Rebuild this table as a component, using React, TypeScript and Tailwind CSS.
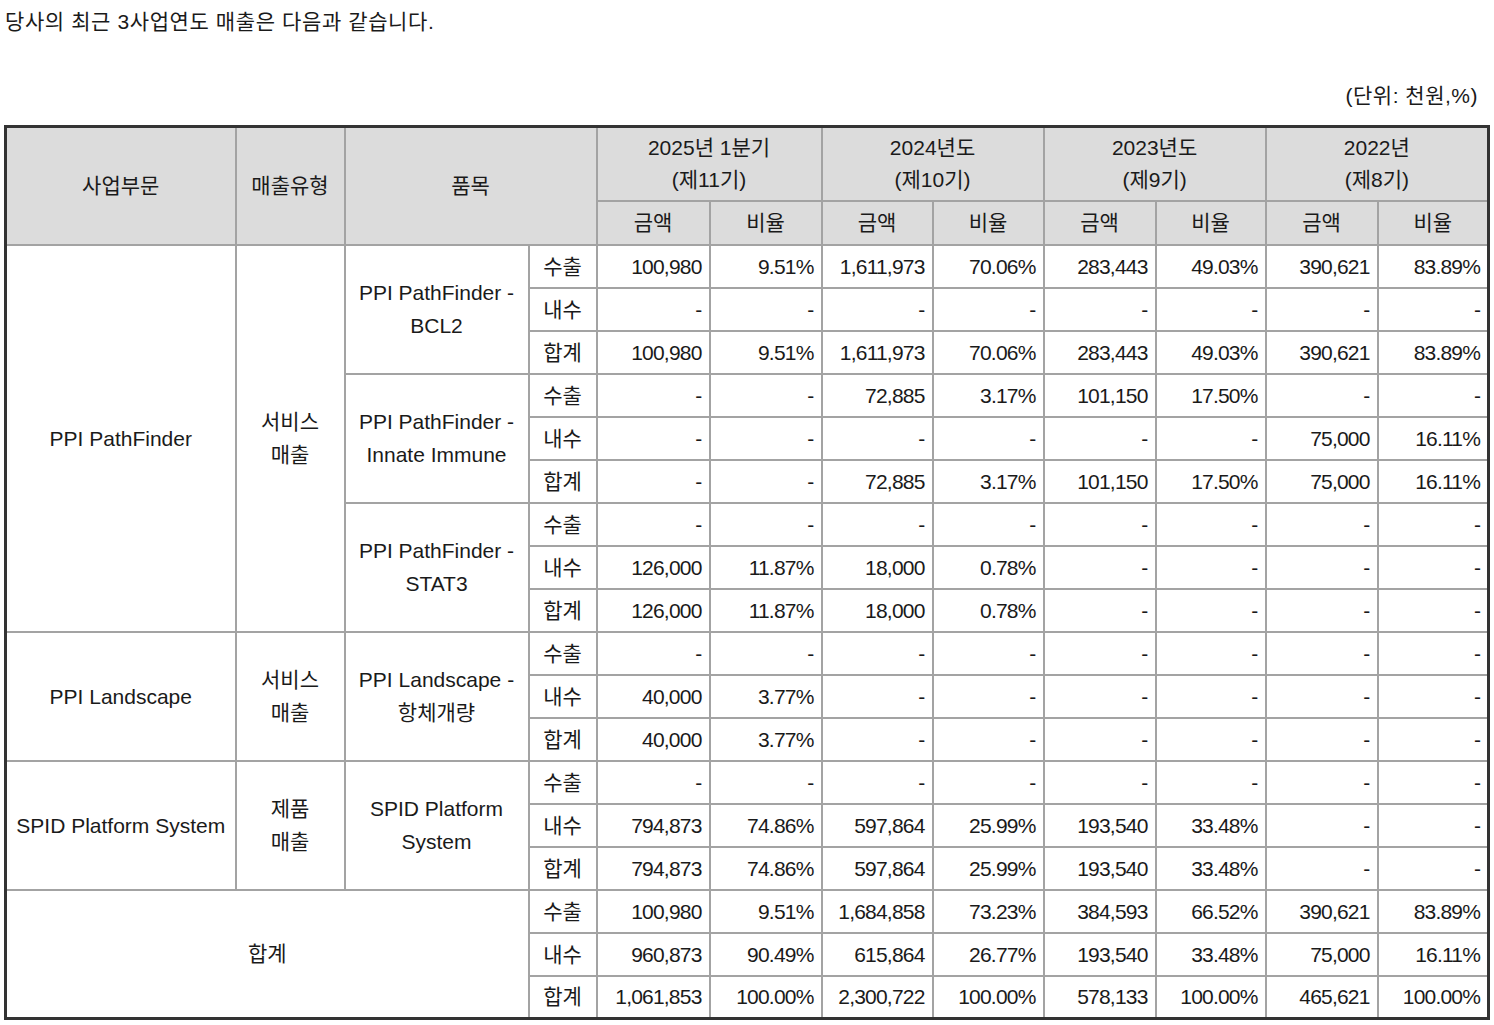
const periods = [
  { year: "2025년 1분기", term: "(제11기)" },
  { year: "2024년도", term: "(제10기)" },
  { year: "2023년도", term: "(제9기)" },
  { year: "2022년", term: "(제8기)" },
];

const colWidths = [230, 109, 184, 68, 113, 112, 111, 111, 112, 110, 112, 111];

const D = ["-", "-", "-", "-", "-", "-", "-", "-"];

type Item = { name: string[]; rows: [string, string[]][] };
type Segment = { name: string; type: string[]; items: Item[] };

const segments: Segment[] = [
  {
    name: "PPI PathFinder",
    type: ["서비스", "매출"],
    items: [
      {
        name: ["PPI PathFinder -", "BCL2"],
        rows: [
          ["수출", ["100,980", "9.51%", "1,611,973", "70.06%", "283,443", "49.03%", "390,621", "83.89%"]],
          ["내수", D],
          ["합계", ["100,980", "9.51%", "1,611,973", "70.06%", "283,443", "49.03%", "390,621", "83.89%"]],
        ],
      },
      {
        name: ["PPI PathFinder -", "Innate Immune"],
        rows: [
          ["수출", ["-", "-", "72,885", "3.17%", "101,150", "17.50%", "-", "-"]],
          ["내수", ["-", "-", "-", "-", "-", "-", "75,000", "16.11%"]],
          ["합계", ["-", "-", "72,885", "3.17%", "101,150", "17.50%", "75,000", "16.11%"]],
        ],
      },
      {
        name: ["PPI PathFinder -", "STAT3"],
        rows: [
          ["수출", D],
          ["내수", ["126,000", "11.87%", "18,000", "0.78%", "-", "-", "-", "-"]],
          ["합계", ["126,000", "11.87%", "18,000", "0.78%", "-", "-", "-", "-"]],
        ],
      },
    ],
  },
  {
    name: "PPI Landscape",
    type: ["서비스", "매출"],
    items: [
      {
        name: ["PPI Landscape -", "항체개량"],
        rows: [
          ["수출", D],
          ["내수", ["40,000", "3.77%", "-", "-", "-", "-", "-", "-"]],
          ["합계", ["40,000", "3.77%", "-", "-", "-", "-", "-", "-"]],
        ],
      },
    ],
  },
  {
    name: "SPID Platform System",
    type: ["제품", "매출"],
    items: [
      {
        name: ["SPID Platform", "System"],
        rows: [
          ["수출", D],
          ["내수", ["794,873", "74.86%", "597,864", "25.99%", "193,540", "33.48%", "-", "-"]],
          ["합계", ["794,873", "74.86%", "597,864", "25.99%", "193,540", "33.48%", "-", "-"]],
        ],
      },
    ],
  },
];

const totals: [string, string[]][] = [
  ["수출", ["100,980", "9.51%", "1,684,858", "73.23%", "384,593", "66.52%", "390,621", "83.89%"]],
  ["내수", ["960,873", "90.49%", "615,864", "26.77%", "193,540", "33.48%", "75,000", "16.11%"]],
  ["합계", ["1,061,853", "100.00%", "2,300,722", "100.00%", "578,133", "100.00%", "465,621", "100.00%"]],
];

const cell = "border-2 border-[#a3a3a3]";
const head = `${cell} bg-[#dcdcdc] text-center font-normal`;

const Lines = ({ lines }: { lines: string[] }) => (
  <>
    {lines.map((l, i) => (
      <div key={i}>{l}</div>
    ))}
  </>
);

const Values = ({ kind, values }: { kind: string; values: string[] }) => (
  <>
    <td className={`${cell} text-center`}>{kind}</td>
    {values.map((v, i) => (
      <td key={i} className={`${cell} text-right pr-[7px] tracking-[-0.8px]`}>
        {v}
      </td>
    ))}
  </>
);

export default function App() {
  return (
    <div className="pl-[4px] pt-[9px] font-['Liberation_Sans','Noto_Sans_CJK_KR',sans-serif] text-[21px] text-[#1a1a1a]">
      <p className="leading-[26px] pl-[1px] tracking-[0.6px]">당사의 최근 3사업연도 매출은 다음과 같습니다.</p>
      <div className="mt-[48px] w-[1484px] pr-[10px] text-right leading-[26px] tracking-[0.5px]">(단위: 천원,%)</div>
      <table className="mt-[16px] w-[1484px] table-fixed border-collapse border-[3px] border-[#333] leading-[33px]">
        <colgroup>
          {colWidths.map((w, i) => (
            <col key={i} style={{ width: w }} />
          ))}
        </colgroup>
        <thead>
          <tr className="h-[74px]">
            <th rowSpan={2} className={head}>사업부문</th>
            <th rowSpan={2} className={head}>매출유형</th>
            <th rowSpan={2} colSpan={2} className={head}>품목</th>
            {periods.map((p) => (
              <th key={p.year} colSpan={2} className={`${head} leading-[32px]`}>
                <div>{p.year}</div>
                <div>{p.term}</div>
              </th>
            ))}
          </tr>
          <tr className="h-[44px]">
            {periods.map((p) => (
              <>
                <th key={p.year + "a"} className={head}>금액</th>
                <th key={p.year + "b"} className={head}>비율</th>
              </>
            ))}
          </tr>
        </thead>
        <tbody>
          {segments.map((seg) =>
            seg.items.map((item, ii) =>
              item.rows.map(([kind, values], ri) => (
                <tr key={seg.name + ii + kind} className="h-[43px]">
                  {ii === 0 && ri === 0 && (
                    <>
                      <td rowSpan={seg.items.length * 3} className={`${cell} text-center`}>
                        {seg.name}
                      </td>
                      <td rowSpan={seg.items.length * 3} className={`${cell} text-center`}>
                        <Lines lines={seg.type} />
                      </td>
                    </>
                  )}
                  {ri === 0 && (
                    <td rowSpan={3} className={`${cell} text-center`}>
                      <Lines lines={item.name} />
                    </td>
                  )}
                  <Values kind={kind} values={values} />
                </tr>
              ))
            )
          )}
          {totals.map(([kind, values], ri) => (
            <tr key={"t" + kind} className="h-[43px]">
              {ri === 0 && (
                <td rowSpan={3} colSpan={3} className={`${cell} text-center`}>
                  합계
                </td>
              )}
              <Values kind={kind} values={values} />
            </tr>
          ))}
        </tbody>
      </table>
    </div>
  );
}
